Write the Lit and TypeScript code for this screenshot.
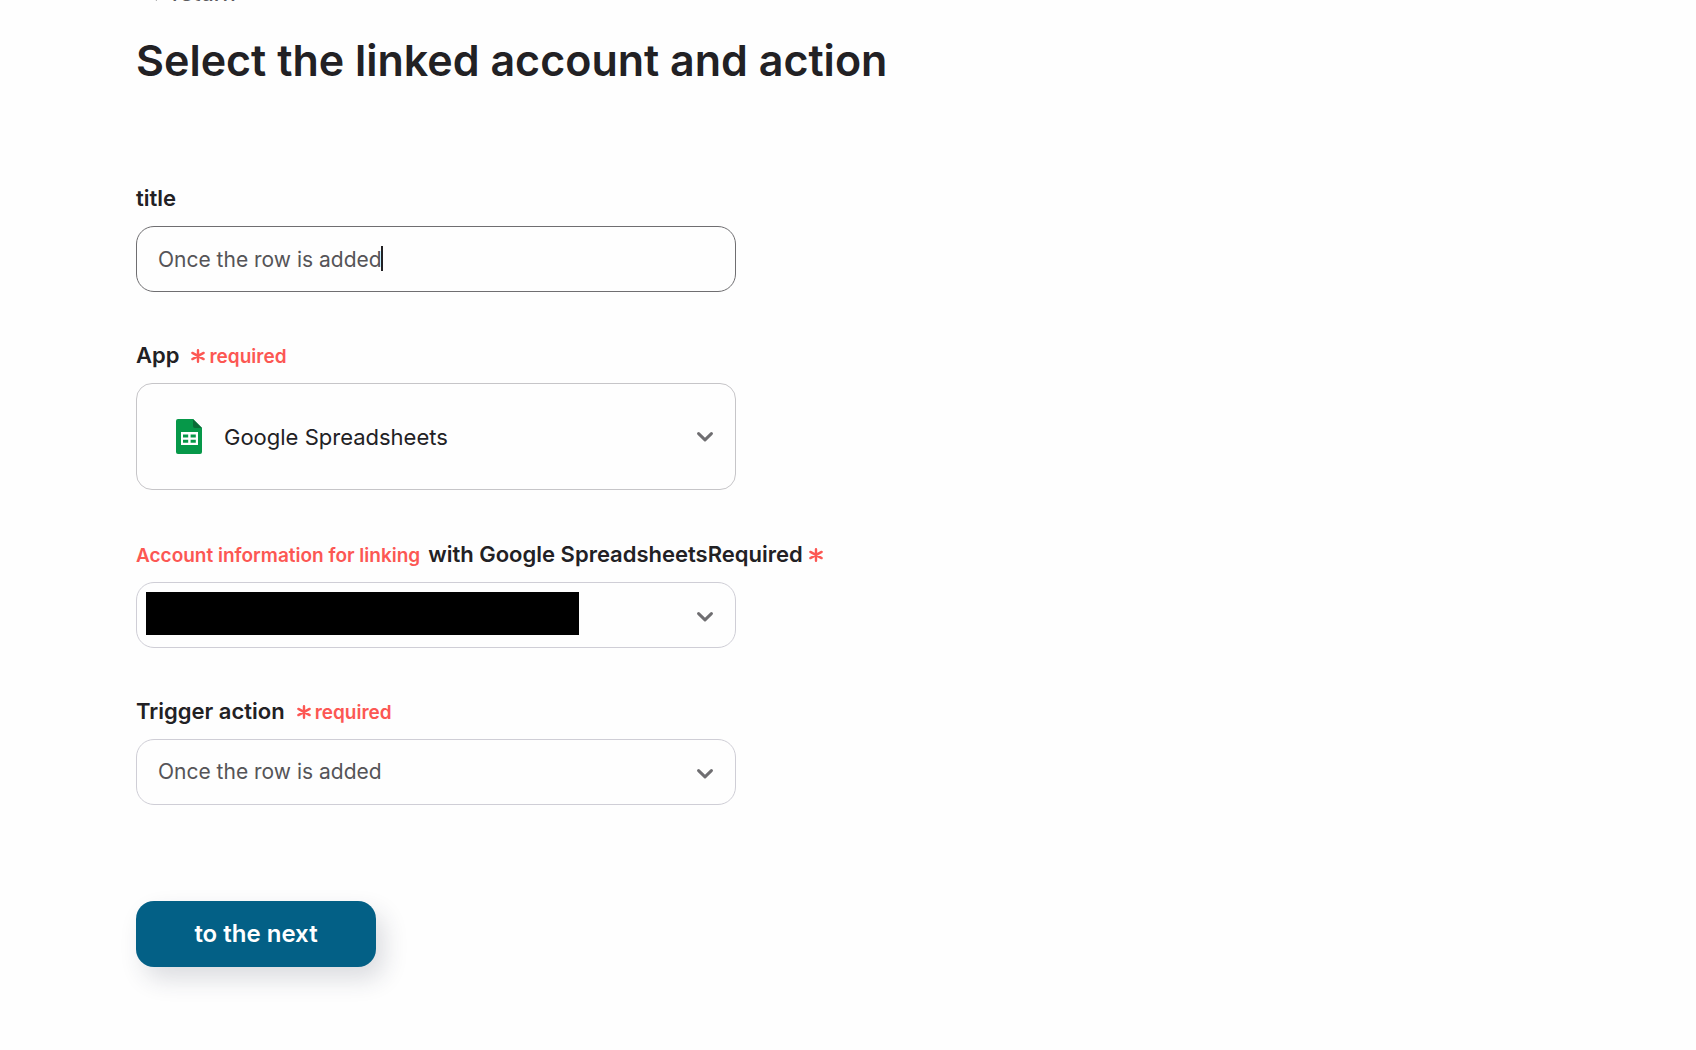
import { LitElement, html, css, svg } from "lit";
import { customElement, state } from "lit/decorators.js";

const asterisk = html`<svg class="asterisk" viewBox="0 0 14 14" aria-hidden="true">
  <path d="M7 1.2v11.6M1.4 3.9l11.2 6.2M12.6 3.9L1.4 10.1" />
</svg>`;

const chevron = html`<svg class="chevron" viewBox="0 0 16 10" aria-hidden="true">
  <path d="M1.6 1.6L8 7.8l6.4-6.2" />
</svg>`;

const sheetCells = svg`<path fill="#fff" fill-rule="evenodd"
  d="M5 13h17v13H5zM7 15.4h5.2v3H7zM14.6 15.4h5.2v3h-5.2zM7 20.8h5.2v3H7zM14.6 20.8h5.2v3h-5.2z" />`;

const sheetIcon = html`<svg class="sheet" viewBox="0 0 26 35" aria-hidden="true">
  <path fill="#069849" d="M2 0h15l9 9v24a2 2 0 0 1-2 2H2a2 2 0 0 1-2-2V2a2 2 0 0 1 2-2z" />
  <path fill="#0a6b37" d="M17 0l9 9h-7a2 2 0 0 1-2-2z" />
  ${sheetCells}
</svg>`;

@customElement("app-root")
export class AppRoot extends LitElement {
  @state() private name = "Once the row is added";

  static styles = css`
    :host {
      display: block;
      min-height: 100vh;
      overflow: hidden;
      box-sizing: border-box;
      background: #fefefe;
      color: #222124;
      font-family: Inter, "Liberation Sans", sans-serif;
      font-size: 22px;
      line-height: 24px;
    }
    main {
      margin-top: -19px;
      padding: 0 136px 80px;
    }
    .back {
      display: inline-flex;
      align-items: center;
      gap: 12px;
      padding-left: 12px;
      color: #5c5b5e;
      font-weight: 500;
      text-decoration: none;
    }
    .back svg {
      width: 12px;
      height: 16px;
      fill: none;
      stroke: currentColor;
      stroke-width: 2;
    }
    h1 {
      margin: 29px 0 100px;
      font-size: 43px;
      line-height: 52px;
      font-weight: 600;
    }
    form {
      display: flex;
      flex-direction: column;
    }
    .field {
      display: flex;
      flex-direction: column;
      gap: 16px;
      margin-bottom: 51px;
    }
    .roomy {
      margin-bottom: 52px;
    }
    label {
      display: flex;
      align-items: baseline;
      height: 24px;
      font-weight: 600;
    }
    .note {
      display: inline-flex;
      align-items: baseline;
      gap: 4px;
      color: #fc5753;
      font-size: 19px;
      font-weight: 600;
    }
    .after {
      margin-left: 12px;
    }
    .before {
      margin-right: 8px;
    }
    .mark {
      margin-left: 6px;
    }
    .asterisk {
      flex: none;
      width: 14px;
      height: 14px;
      margin-bottom: -3px;
      fill: none;
      stroke: #fc5753;
      stroke-width: 2.4;
      stroke-linecap: round;
    }
    .control {
      position: relative;
      display: grid;
      align-items: center;
      box-sizing: border-box;
      width: 100%;
      max-width: 600px;
      border: 1px solid #cfced6;
      border-radius: 18px;
    }
    .active {
      border-color: #6f6e71;
    }
    input,
    select {
      grid-area: 1 / 1;
      box-sizing: border-box;
      width: 100%;
      height: 64px;
      margin: 0;
      padding: 0 56px 0 21px;
      border: 0;
      border-radius: 17px;
      outline: none;
      appearance: none;
      background: none;
      color: #555457;
      font: inherit;
      font-size: 21px;
      line-height: 32px;
    }
    .app {
      border-color: #c6c5c8;
      border-radius: 16px;
    }
    .app select {
      height: 105px;
      padding-left: 87px;
      color: #222124;
      font-size: 22px;
    }
    .sheet {
      grid-area: 1 / 1;
      width: 26px;
      height: 35px;
      margin-left: 39px;
      pointer-events: none;
    }
    .chevron {
      grid-area: 1 / 1;
      justify-self: end;
      width: 16px;
      height: 10px;
      margin-top: 4px;
      margin-right: 22px;
      fill: none;
      stroke: #6f6e71;
      stroke-width: 3;
      stroke-linecap: round;
      stroke-linejoin: round;
      pointer-events: none;
    }
    .app .chevron {
      margin-top: 0;
    }
    .caret {
      position: absolute;
      top: 19px;
      left: 244px;
      width: 2px;
      height: 25px;
      background: #222124;
    }
    .redaction {
      position: absolute;
      top: 9px;
      left: 9px;
      width: 433px;
      height: 43px;
      background: #000;
    }
    button {
      align-self: flex-start;
      width: 240px;
      height: 66px;
      margin-top: 45px;
      border: 0;
      border-radius: 18px;
      background: #036086;
      box-shadow: 8px 12px 24px rgba(40, 45, 70, 0.16);
      color: #fff;
      font: inherit;
      font-size: 24px;
      font-weight: 600;
    }
  `;

  render() {
    return html`<main>
      <a class="back" href="#"
        ><svg viewBox="0 0 12 16" aria-hidden="true"><path d="M9 2L2 8l7 7" /></svg>return</a
      >
      <h1>Select the linked account and action</h1>
      <form @submit=${(e: Event) => e.preventDefault()}>
        <div class="field">
          <label for="name">title</label>
          <div class="control active">
            <input
              id="name"
              type="text"
              .value=${this.name}
              @input=${(e: Event) => (this.name = (e.target as HTMLInputElement).value)}
            />
            <span class="caret"></span>
          </div>
        </div>
        <div class="field roomy">
          <label for="app">App<span class="note after">${asterisk}required</span></label>
          <div class="control app">
            <select id="app">
              <option>Google Spreadsheets</option>
            </select>
            ${sheetIcon}${chevron}
          </div>
        </div>
        <div class="field">
          <label for="account"
            ><span class="note before">Account information for linking</span
            ><span>with Google SpreadsheetsRequired</span
            ><span class="note mark">${asterisk}</span></label
          >
          <div class="control">
            <select id="account"></select>
            <span class="redaction"></span>
            ${chevron}
          </div>
        </div>
        <div class="field">
          <label for="trigger">Trigger action<span class="note after">${asterisk}required</span></label>
          <div class="control">
            <select id="trigger">
              <option>Once the row is added</option>
            </select>
            ${chevron}
          </div>
        </div>
        <button type="submit">to the next</button>
      </form>
    </main>`;
  }
}
